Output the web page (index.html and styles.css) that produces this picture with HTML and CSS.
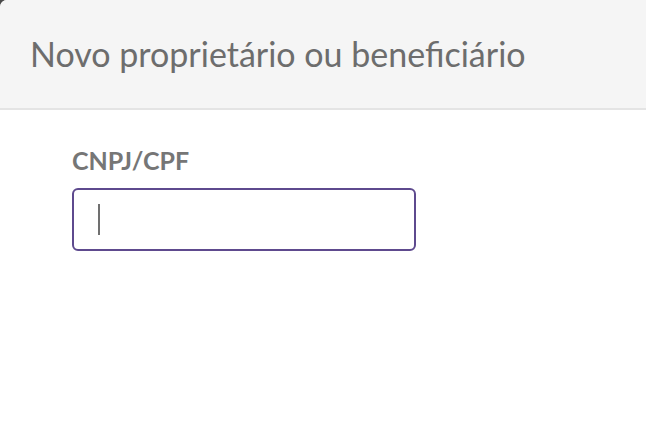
FILE: index.html
```html
<!DOCTYPE html>
<html lang="pt-BR">
<head>
<meta charset="utf-8">
<link rel="stylesheet" href="styles.css">
</head>
<body>
<div class="modal">
  <header class="modal-header">
    <h1 class="modal-title">Novo proprietário ou beneficiário</h1>
  </header>
  <div class="modal-body">
    <label class="field-label" for="doc">CNPJ/CPF</label>
    <div class="input-box">
      <span class="caret"></span>
    </div>
  </div>
</div>
</body>
</html>
```
FILE: styles.css
```css
html, body {
  margin: 0;
  padding: 0;
  background: #4a4a4a;
  width: 646px;
  height: 428px;
  overflow: hidden;
}
.modal {
  background: #ffffff;
  border-top-left-radius: 7px;
  height: 428px;
  overflow: hidden;
  font-family: Lato, "Open Sans", sans-serif;
}
.modal-header {
  background: #f5f5f5;
  height: 110px;
  border-bottom: 2px solid #e4e4e4;
  box-sizing: border-box;
  display: flex;
  align-items: center;
  padding-left: 30px;
}
.modal-title {
  margin: 0;
  font-weight: 400;
  font-size: 34px;
  line-height: 40px;
  color: #6d6d6d;
  padding-bottom: 1px;
}
.modal-body {
  padding: 36px 0 0 72px;
  display: flex;
  flex-direction: column;
}
.field-label {
  font-weight: 700;
  font-size: 25px;
  color: #767676;
  margin-left: 0;
  line-height: 28px;
}
.input-box {
  margin-top: 14px;
  width: 344px;
  height: 63px;
  box-sizing: border-box;
  border: 2px solid #5e4a8e;
  border-radius: 6px;
  display: flex;
  align-items: center;
  padding-left: 24px;
}
.caret {
  width: 2px;
  height: 31px;
  background: #707070;
}
```
